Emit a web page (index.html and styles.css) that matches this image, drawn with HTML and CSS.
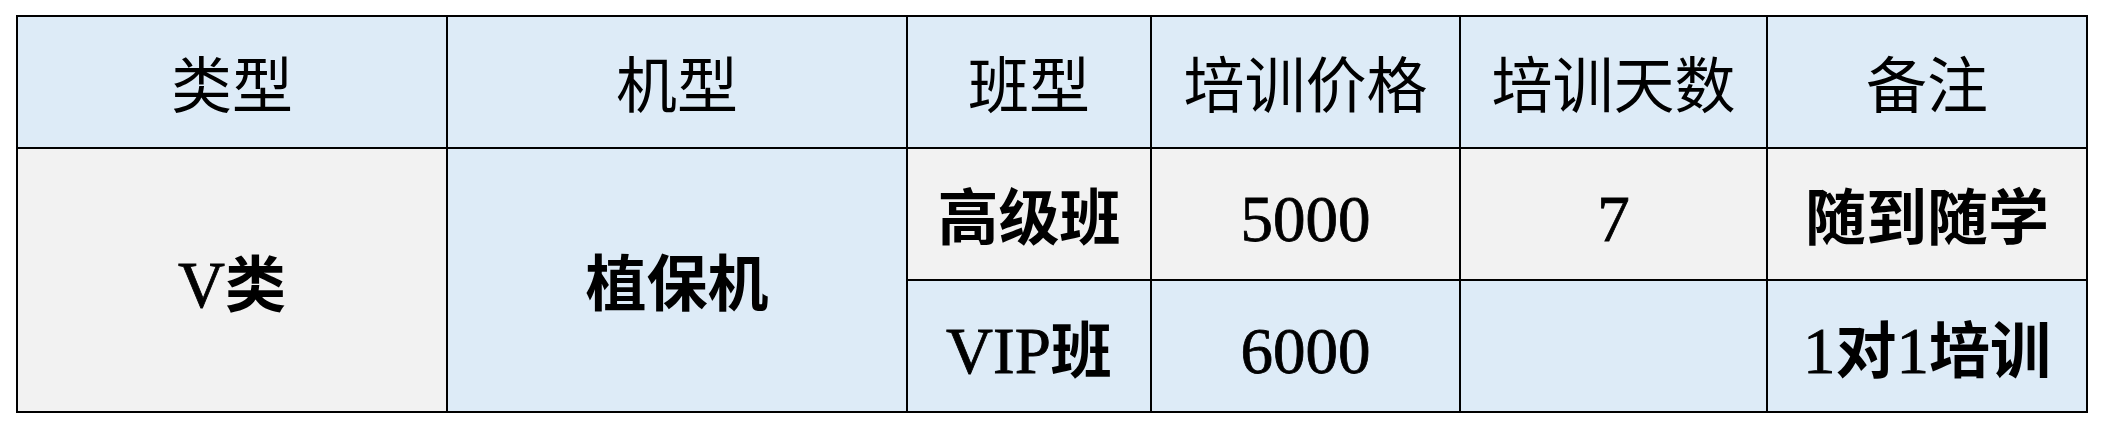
FILE: index.html
```html
<!DOCTYPE html>
<html lang="zh-CN">
<head>
<meta charset="utf-8">
<title>培训价格表</title>
<link rel="stylesheet" href="styles.css">
</head>
<body>
<table class="price-table">
  <colgroup>
    <col class="c1"><col class="c2"><col class="c3"><col class="c4"><col class="c5"><col class="c6">
  </colgroup>
  <thead>
    <tr class="head-row">
      <th>类型</th>
      <th>机型</th>
      <th>班型</th>
      <th>培训价格</th>
      <th>培训天数</th>
      <th>备注</th>
    </tr>
  </thead>
  <tbody>
    <tr class="row">
      <td rowspan="2" class="gray"><span class="lat">V</span>类</td>
      <td rowspan="2" class="blue">植保机</td>
      <td class="gray">高级班</td>
      <td class="gray"><span class="lat">5000</span></td>
      <td class="gray"><span class="lat">7</span></td>
      <td class="gray">随到随学</td>
    </tr>
    <tr class="row last">
      <td class="blue"><span class="lat">VIP</span>班</td>
      <td class="blue"><span class="lat">6000</span></td>
      <td class="blue"></td>
      <td class="blue"><span class="lat">1</span>对<span class="lat">1</span>培训</td>
    </tr>
  </tbody>
</table>
</body>
</html>
```

FILE: styles.css
```css
html, body {
  margin: 0;
  padding: 0;
  background: #ffffff;
}

body {
  padding: 15px 16px 0 16px;
}

.price-table {
  border-collapse: collapse;
  table-layout: fixed;
  width: 2070px;
  font-family: "Liberation Serif", "Noto Sans CJK SC", serif;
  color: #000;
}

.c1 { width: 430px; }
.c2 { width: 460px; }
.c3 { width: 244px; }
.c4 { width: 309px; }
.c5 { width: 307px; }
.c6 { width: 320px; }

.price-table th,
.price-table td {
  border: 2px solid #000;
  text-align: center;
  vertical-align: middle;
  padding: 10px 0 0 0;
  font-size: 61px;
  line-height: 1;
  white-space: nowrap;
}

.price-table th {
  font-weight: normal;
  background: #ddebf7;
  height: 120px;
}

.price-table td {
  font-weight: bold;
  height: 120px;
}

.price-table .lat {
  font-size: 65px;
  font-weight: normal;
  -webkit-text-stroke: 0.8px #000;
}

.price-table .gray { background: #f2f2f2; }
.price-table .blue { background: #ddebf7; }
```
